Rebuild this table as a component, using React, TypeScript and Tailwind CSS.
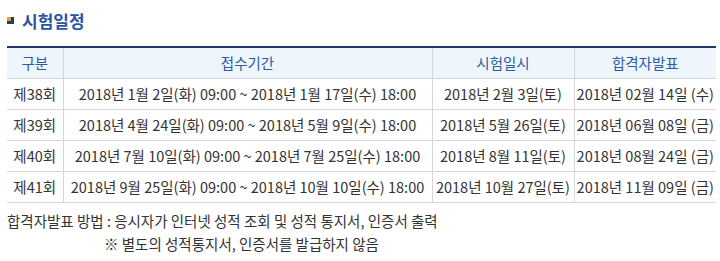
import React from "react";

const rows = [
  ["제38회", "2018년 1월 2일(화) 09:00 ~ 2018년 1월 17일(수) 18:00", "2018년 2월 3일(토)", "2018년 02월 14일 (수)"],
  ["제39회", "2018년 4월 24일(화) 09:00 ~ 2018년 5월 9일(수) 18:00", "2018년 5월 26일(토)", "2018년 06월 08일 (금)"],
  ["제40회", "2018년 7월 10일(화) 09:00 ~ 2018년 7월 25일(수) 18:00", "2018년 8월 11일(토)", "2018년 08월 24일 (금)"],
  ["제41회", "2018년 9월 25일(화) 09:00 ~ 2018년 10월 10일(수) 18:00", "2018년 10월 27일(토)", "2018년 11월 09일 (금)"],
];

export default function App() {
  return (
    <div
      className="w-[720px] h-[261px] bg-white text-[#333] overflow-hidden"
      style={{ fontFamily: '"Noto Sans CJK KR", "Noto Sans", sans-serif' }}
    >
      <div className="flex items-center pl-[7px] pt-[8px] h-[22px] mt-[5px]">
        <span className="relative w-[7px] h-[7px] bg-[#1f3f7a] mr-[8px]">
          <span className="absolute left-0 top-0 w-[4px] h-[4px] bg-[#d9a520]" />
        </span>
        <span className="text-[17px] font-bold text-[#2a55a5] leading-none">시험일정</span>
      </div>
      <table className="ml-[7px] mt-[19px] w-[709px] border-collapse text-[14.5px]">
        <thead>
          <tr className="bg-[#eef6fb] border-t-2 border-t-[#1e3669] h-[31px] text-[#2a5aa8]">
            <th className="w-[56px] font-normal border-r border-[#d6d6d6] border-b">구분</th>
            <th className="w-[369px] font-normal border-r border-[#d6d6d6] border-b">접수기간</th>
            <th className="w-[142px] font-normal border-r border-[#d6d6d6] border-b">시험일시</th>
            <th className="w-[142px] font-normal border-[#d6d6d6] border-b">합격자발표</th>
          </tr>
        </thead>
        <tbody>
          {rows.map((r) => (
            <tr key={r[0]} className="h-[31px] border-b border-[#d6d6d6]">
              <td className="text-center border-r border-[#d6d6d6] whitespace-nowrap">{r[0]}</td>
              <td className="text-center border-r border-[#d6d6d6] whitespace-nowrap">{r[1]}</td>
              <td className="text-center border-r border-[#d6d6d6] whitespace-nowrap">{r[2]}</td>
              <td className="text-center whitespace-nowrap">{r[3]}</td>
            </tr>
          ))}
        </tbody>
      </table>
      <div className="pl-[7px] mt-[6px] text-[14.5px] leading-[23px]">
        <div>합격자발표 방법 : 응시자가 인터넷 성적 조회 및 성적 통지서, 인증서 출력</div>
        <div className="pl-[97px]">※ 별도의 성적통지서, 인증서를 발급하지 않음</div>
      </div>
    </div>
  );
}
